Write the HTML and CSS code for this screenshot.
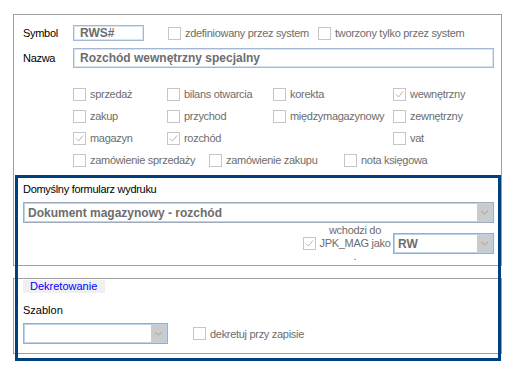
FILE: index.html
```html
<!DOCTYPE html>
<html>
<head>
    <meta charset="utf-8">
    <link rel="stylesheet" href="styles.css">
</head>
<body>
<div class="page">
    <div class="group group-main">
        <div class="row row-symbol">
            <span class="field-label">Symbol</span>
            <span class="input input-symbol">RWS#</span>
            <span class="check check-system"><span class="box"></span>zdefiniowany przez system</span>
            <span class="check"><span class="box"></span>tworzony tylko przez system</span>
        </div>
        <div class="row row-name">
            <span class="field-label">Nazwa</span>
            <span class="input input-name">Rozchód wewnętrzny specjalny</span>
        </div>

        <!-- document flags -->
        <div class="flags">
            <span class="check"><span class="box"></span>sprzedaż</span>
            <span class="check"><span class="box"></span>bilans otwarcia</span>
            <span class="check"><span class="box"></span>korekta</span>
            <span class="check"><span class="box"><svg viewBox="0 0 11 11"><path d="M2 5.5 L4.5 8 L9 2.5"/></svg></span>wewnętrzny</span>
            <span class="check"><span class="box"></span>zakup</span>
            <span class="check"><span class="box"></span>przychod</span>
            <span class="check"><span class="box"></span>międzymagazynowy</span>
            <span class="check"><span class="box"></span>zewnętrzny</span>
            <span class="check"><span class="box"><svg viewBox="0 0 11 11"><path d="M2 5.5 L4.5 8 L9 2.5"/></svg></span>magazyn</span>
            <span class="check"><span class="box"><svg viewBox="0 0 11 11"><path d="M2 5.5 L4.5 8 L9 2.5"/></svg></span>rozchód</span>
            <span></span>
            <span class="check"><span class="box"></span>vat</span>
        </div>
        <div class="flags-last">
            <span class="check check-order"><span class="box"></span>zamówienie sprzedaży</span>
            <span class="check check-order"><span class="box"></span>zamówienie zakupu</span>
            <span class="check"><span class="box"></span>nota księgowa</span>
        </div>

        <div class="print-label">Domyślny formularz wydruku</div>
        <div class="combo combo-print">
            <span class="combo-text">Dokument magazynowy - rozchód</span>
            <span class="combo-btn"><svg viewBox="0 0 15 19"><path d="M4 8 L7.5 11 L11 8"/></svg></span>
        </div>
        <div class="jpk">
            <span class="box"><svg viewBox="0 0 11 11"><path d="M2 5.5 L4.5 8 L9 2.5"/></svg></span>
            <span class="jpk-label">wchodzi do<br>JPK_MAG jako<br>.</span>
            <div class="combo combo-jpk">
                <span class="combo-text">RW</span>
                <span class="combo-btn"><svg viewBox="0 0 15 19"><path d="M4 8 L7.5 11 L11 8"/></svg></span>
            </div>
        </div>
    </div>

    <div class="group group-decree">
        <div class="tab">Dekretowanie</div>
        <div class="decree-label">Szablon</div>
        <div class="decree-row">
            <div class="combo combo-decree">
                <span class="combo-text"></span>
                <span class="combo-btn"><svg viewBox="0 0 15 19"><path d="M4 8 L7.5 11 L11 8"/></svg></span>
            </div>
            <span class="check check-decree"><span class="box"></span>dekretuj przy zapisie</span>
        </div>
    </div>

    <div class="focus-frame"></div>
</div>
</body>
</html>
```

FILE: styles.css
```css
body {
    margin: 0;
    width: 513px;
    height: 370px;
    background: #fff;
    font-family: 'Liberation Sans', Arial, sans-serif;
    font-size: 11px;
    letter-spacing: -0.3px;
    color: #000;
    overflow: hidden;
}
.page {
    position: relative;
    padding: 14px 0 0 13px;
}
.group {
    box-sizing: border-box;
    width: 489px;
    border: 1px solid #a0a0a0;
}
.group-main {
    height: 252px;
    padding: 10px 7px 0 9px;
}
.row {
    display: flex;
    align-items: center;
}
.row-symbol {
    height: 16px;
}
.row-name {
    height: 20px;
    margin-top: 7px;
}
.field-label {
    width: 50px;
    flex: none;
}
.input {
    box-sizing: border-box;
    height: 100%;
    display: flex;
    align-items: center;
    padding-left: 6px;
    border: 1px solid #a3b8d2;
    box-shadow: inset 0 0 0 1px #d8e4f1;
    font-size: 12px;
    font-weight: bold;
    letter-spacing: 0;
    color: #6d6d6d;
}
.input-symbol {
    width: 71px;
    margin-right: 24px;
}
.input-name {
    flex: 1;
}

/* checkboxes */
.check {
    display: flex;
    align-items: center;
    color: #6d6d6d;
    white-space: nowrap;
}
.box {
    box-sizing: border-box;
    width: 13px;
    height: 13px;
    flex: none;
    margin-right: 4px;
    border: 1px solid #c6c6c6;
    background: #fff;
}
.box svg {
    display: block;
    width: 11px;
    height: 11px;
}
.box path {
    fill: none;
    stroke: #b4b4b4;
    stroke-width: 1;
}
.check-system {
    width: 150px;
}
.flags {
    display: grid;
    grid-template-columns: 94px 106px 120px auto;
    grid-auto-rows: 22px;
    margin: 15px 0 0 50px;
}
.flags-last {
    display: flex;
    height: 22px;
    margin-left: 50px;
}
.check-order {
    width: 136px;
}
.check-order + .check-order {
    width: 135px;
}

/* print form */
.print-label {
    height: 13px;
    line-height: 13px;
    margin-top: 12px;
}
.combo {
    box-sizing: border-box;
    display: flex;
    border: 1px solid #9eacbd;
    box-shadow: inset 0 0 0 1px #bcd2ea;
    background: #fff;
}
.combo-text {
    flex: 1;
    display: flex;
    align-items: center;
    padding-left: 4px;
    font-size: 12px;
    font-weight: bold;
    letter-spacing: 0;
    color: #6d6d6d;
}
.combo-btn {
    width: 15px;
    margin: 1px;
    background: #cbcbcb;
    display: flex;
    align-items: center;
}
.combo-btn svg {
    width: 15px;
    height: 19px;
}
.combo-btn path {
    fill: none;
    stroke: #a4a4a4;
    stroke-width: 1;
}
.combo-print {
    height: 21px;
    margin-top: 6px;
}
.jpk {
    display: flex;
    align-items: center;
    justify-content: flex-end;
    height: 39px;
    margin-top: 1px;
}
.jpk .box {
    margin-right: 1px;
}
.jpk-label {
    width: 76px;
    text-align: center;
    line-height: 13px;
    color: #6d6d6d;
}
.combo-jpk {
    width: 101px;
    height: 21px;
}

/* decree group */
.group-decree {
    height: 76px;
    margin-top: 12px;
    padding: 1px 7px 0 9px;
}
.tab {
    display: inline-block;
    height: 13px;
    line-height: 12px;
    padding: 0 8px 0 7px;
    background: #f0f0f0;
    color: #0000ff;
    letter-spacing: 0;
    vertical-align: top;
}
.decree-label {
    height: 14px;
    line-height: 14px;
    margin-top: 10px;
    letter-spacing: 0;
}
.decree-row {
    display: flex;
    align-items: center;
    margin-top: 6px;
}
.combo-decree {
    width: 145px;
    height: 21px;
}
.check-decree {
    margin-left: 25px;
}

.focus-frame {
    position: absolute;
    left: 15px;
    top: 175px;
    box-sizing: border-box;
    width: 486px;
    height: 186px;
    border: 3px solid #00407e;
    pointer-events: none;
}
```
